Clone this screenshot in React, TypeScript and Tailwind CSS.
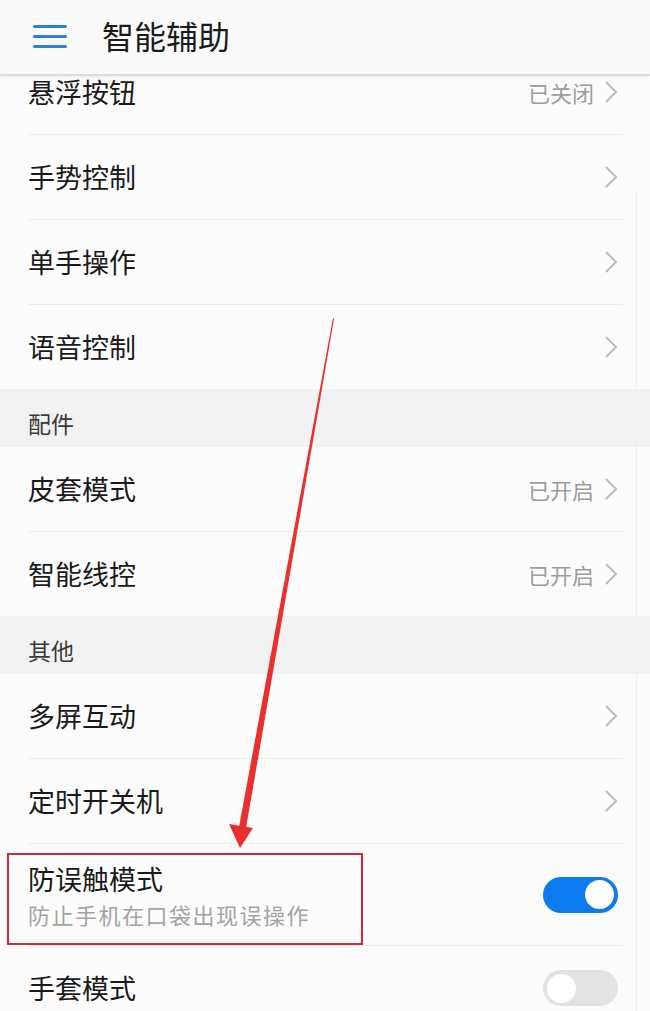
import React from 'react';

type Item = {
  title: string;
  sub?: string;
  value?: string;
  toggle?: boolean;
  last?: boolean;
};

const FONT = "font-['Noto_Sans_CJK_SC','Noto_Sans',sans-serif]";

const Chevron = () => (
  <svg width="14" height="24" viewBox="0 0 14 24" className="ml-[10px] mr-[5px]">
    <path d="M2 2 L12 12 L2 22" fill="none" stroke="#bdbdbd" strokeWidth="2" />
  </svg>
);

const Toggle = ({ on }: { on: boolean }) =>
  on ? (
    <div className="mr-[5px] w-[75px] h-[36px] rounded-full bg-[#0d7bf0] flex items-center justify-end px-[4px]">
      <div className="w-[29px] h-[29px] rounded-full bg-white" />
    </div>
  ) : (
    <div className="mr-[5px] w-[75px] h-[36px] rounded-full bg-[#e3e3e3] flex items-center justify-start px-[4px]">
      <div className="w-[29px] h-[29px] rounded-full bg-white" />
    </div>
  );

const Row = ({ item }: { item: Item }) => (
  <div className="pl-[28px] pr-[27px]">
    <div
      className={`flex items-center justify-between ${item.sub ? 'h-[102px]' : item.last ? 'h-[84px]' : 'h-[85px]'} ${
        item.last ? '' : 'border-b border-[#ececec]'
      }`}
    >
      <div className="flex flex-col">
        <span className={`text-[27px] text-[#1a1a1a] ${item.sub ? 'leading-[39px]' : 'leading-[34px]'}`}>{item.title}</span>
        {item.sub && <span className="text-[22px] leading-[32px] tracking-[1.5px] text-[#a3a3a3]">{item.sub}</span>}
      </div>
      {item.toggle !== undefined ? (
        <Toggle on={item.toggle} />
      ) : (
        <div className="flex items-center">
          {item.value && <span className="text-[22px] text-[#9c9c9c]">{item.value}</span>}
          <Chevron />
        </div>
      )}
    </div>
  </div>
);

const Section = ({ title }: { title: string }) => (
  <div className="h-[58px] bg-[#f2f2f2] pl-[28px] pt-[19px]">
    <span className="text-[23px] leading-[30px] text-[#3a3a3a]">{title}</span>
  </div>
);

export default function App() {
  return (
    <div className={`relative w-[650px] h-[1011px] overflow-hidden bg-[#fcfcfc] ${FONT}`}>
      {/* top bar */}
      <div className="relative z-10 h-[76px] bg-[#fafafa] flex items-center border-b-2 border-[#dcdcdc] shadow-[0_1px_3px_rgba(0,0,0,0.08)]">
        <div className="ml-[33px] w-[34px] flex flex-col gap-[7px] -mt-[2px]">
          <div className="h-[3px] bg-[#2b7fe0] rounded-full" />
          <div className="h-[3px] bg-[#2b7fe0] rounded-full" />
          <div className="h-[3px] bg-[#2b7fe0] rounded-full" />
        </div>
        <span className="ml-[35px] -mt-[5px] text-[32px] text-[#1a1a1a]">智能辅助</span>
      </div>

      {/* list, scrolled a little */}
      <div className="-mt-[26px]">
        <Row item={{ title: '悬浮按钮', value: '已关闭' }} />
        <Row item={{ title: '手势控制' }} />
        <Row item={{ title: '单手操作' }} />
        <Row item={{ title: '语音控制', last: true }} />
        <Section title="配件" />
        <Row item={{ title: '皮套模式', value: '已开启' }} />
        <Row item={{ title: '智能线控', value: '已开启', last: true }} />
        <Section title="其他" />
        <Row item={{ title: '多屏互动' }} />
        <Row item={{ title: '定时开关机' }} />
        <Row item={{ title: '防误触模式', sub: '防止手机在口袋出现误操作', toggle: true }} />
        <Row item={{ title: '手套模式', toggle: false, last: true }} />
      </div>

      {/* faint scroll track */}
      <div className="absolute left-[636px] top-[190px] bottom-0 w-px bg-[#efefef]" />

      {/* annotation: highlight box */}
      <div className="absolute left-[7px] top-[853px] w-[356px] h-[92px] border-2 border-[#d6263a]" />

      {/* annotation: arrow */}
      <svg className="absolute inset-0 pointer-events-none" width="650" height="1011">
        <polygon points="333,318 334,319 246,828 239,827" fill="#ea2f2f" />
        <polygon points="229,824 253,828 240,848" fill="#ea2f2f" />
      </svg>
    </div>
  );
}
